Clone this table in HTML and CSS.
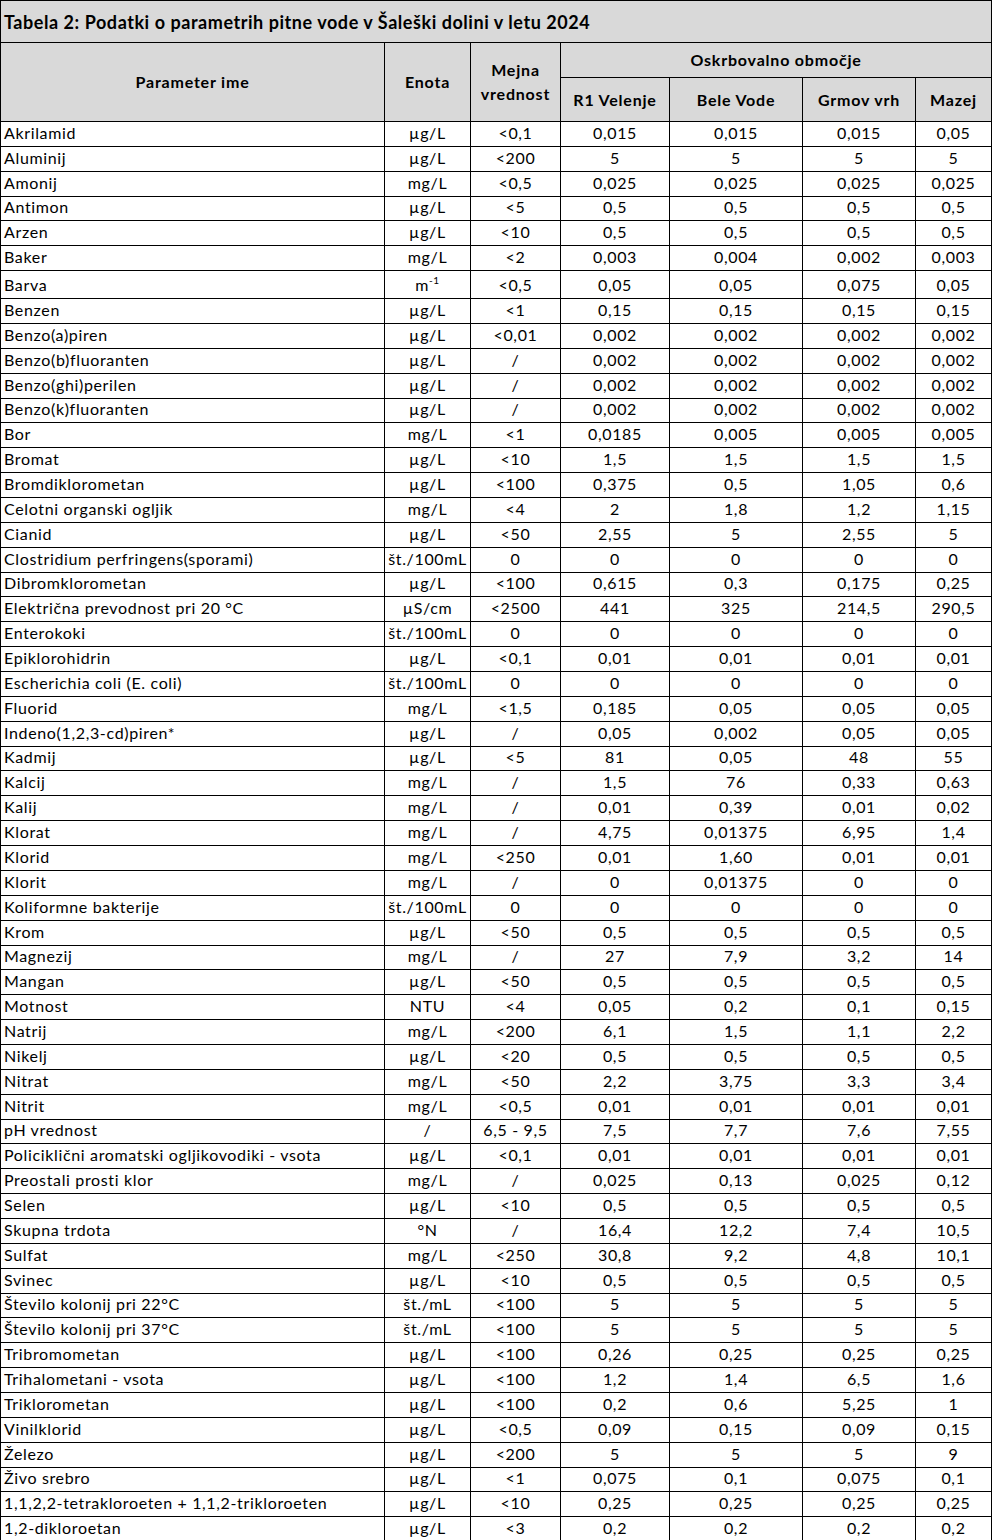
FILE: index.html
```html
<!DOCTYPE html>
<html lang="sl">
<head>
<meta charset="utf-8">
<title>Tabela 2</title>
<link rel="stylesheet" href="styles.css">
</head>
<body>
<table class="tbl">
<colgroup>
<col class="c-name"><col class="c-unit"><col class="c-lim"><col class="c-r1"><col class="c-bv"><col class="c-gv"><col class="c-mz">
</colgroup>
<thead>
<tr class="title-row"><th colspan="7" class="title">Tabela 2: Podatki o parametrih pitne vode v Šaleški dolini v letu 2024</th></tr>
<tr class="h1"><th rowspan="2">Parameter ime</th><th rowspan="2">Enota</th><th rowspan="2">Mejna<br>vrednost</th><th colspan="4">Oskrbovalno območje</th></tr>
<tr class="h2"><th>R1 Velenje</th><th>Bele Vode</th><th>Grmov vrh</th><th>Mazej</th></tr>
</thead>
<tbody>
<tr><td>Akrilamid</td><td>µg/L</td><td>&lt;0,1</td><td>0,015</td><td>0,015</td><td>0,015</td><td>0,05</td></tr>
<tr><td>Aluminij</td><td>µg/L</td><td>&lt;200</td><td>5</td><td>5</td><td>5</td><td>5</td></tr>
<tr><td>Amonij</td><td>mg/L</td><td>&lt;0,5</td><td>0,025</td><td>0,025</td><td>0,025</td><td>0,025</td></tr>
<tr><td>Antimon</td><td>µg/L</td><td>&lt;5</td><td>0,5</td><td>0,5</td><td>0,5</td><td>0,5</td></tr>
<tr><td>Arzen</td><td>µg/L</td><td>&lt;10</td><td>0,5</td><td>0,5</td><td>0,5</td><td>0,5</td></tr>
<tr><td>Baker</td><td>mg/L</td><td>&lt;2</td><td>0,003</td><td>0,004</td><td>0,002</td><td>0,003</td></tr>
<tr class="tall"><td>Barva</td><td>m<sup>-1</sup></td><td>&lt;0,5</td><td>0,05</td><td>0,05</td><td>0,075</td><td>0,05</td></tr>
<tr><td>Benzen</td><td>µg/L</td><td>&lt;1</td><td>0,15</td><td>0,15</td><td>0,15</td><td>0,15</td></tr>
<tr><td>Benzo(a)piren</td><td>µg/L</td><td>&lt;0,01</td><td>0,002</td><td>0,002</td><td>0,002</td><td>0,002</td></tr>
<tr><td>Benzo(b)fluoranten</td><td>µg/L</td><td>/</td><td>0,002</td><td>0,002</td><td>0,002</td><td>0,002</td></tr>
<tr><td>Benzo(ghi)perilen</td><td>µg/L</td><td>/</td><td>0,002</td><td>0,002</td><td>0,002</td><td>0,002</td></tr>
<tr><td>Benzo(k)fluoranten</td><td>µg/L</td><td>/</td><td>0,002</td><td>0,002</td><td>0,002</td><td>0,002</td></tr>
<tr><td>Bor</td><td>mg/L</td><td>&lt;1</td><td>0,0185</td><td>0,005</td><td>0,005</td><td>0,005</td></tr>
<tr><td>Bromat</td><td>µg/L</td><td>&lt;10</td><td>1,5</td><td>1,5</td><td>1,5</td><td>1,5</td></tr>
<tr><td>Bromdiklorometan</td><td>µg/L</td><td>&lt;100</td><td>0,375</td><td>0,5</td><td>1,05</td><td>0,6</td></tr>
<tr><td>Celotni organski ogljik</td><td>mg/L</td><td>&lt;4</td><td>2</td><td>1,8</td><td>1,2</td><td>1,15</td></tr>
<tr><td>Cianid</td><td>µg/L</td><td>&lt;50</td><td>2,55</td><td>5</td><td>2,55</td><td>5</td></tr>
<tr><td>Clostridium perfringens(sporami)</td><td>št./100mL</td><td>0</td><td>0</td><td>0</td><td>0</td><td>0</td></tr>
<tr><td>Dibromklorometan</td><td>µg/L</td><td>&lt;100</td><td>0,615</td><td>0,3</td><td>0,175</td><td>0,25</td></tr>
<tr><td>Električna prevodnost pri 20 °C</td><td>µS/cm</td><td>&lt;2500</td><td>441</td><td>325</td><td>214,5</td><td>290,5</td></tr>
<tr><td>Enterokoki</td><td>št./100mL</td><td>0</td><td>0</td><td>0</td><td>0</td><td>0</td></tr>
<tr><td>Epiklorohidrin</td><td>µg/L</td><td>&lt;0,1</td><td>0,01</td><td>0,01</td><td>0,01</td><td>0,01</td></tr>
<tr><td>Escherichia coli (E. coli)</td><td>št./100mL</td><td>0</td><td>0</td><td>0</td><td>0</td><td>0</td></tr>
<tr><td>Fluorid</td><td>mg/L</td><td>&lt;1,5</td><td>0,185</td><td>0,05</td><td>0,05</td><td>0,05</td></tr>
<tr><td>Indeno(1,2,3-cd)piren*</td><td>µg/L</td><td>/</td><td>0,05</td><td>0,002</td><td>0,05</td><td>0,05</td></tr>
<tr><td>Kadmij</td><td>µg/L</td><td>&lt;5</td><td>81</td><td>0,05</td><td>48</td><td>55</td></tr>
<tr><td>Kalcij</td><td>mg/L</td><td>/</td><td>1,5</td><td>76</td><td>0,33</td><td>0,63</td></tr>
<tr><td>Kalij</td><td>mg/L</td><td>/</td><td>0,01</td><td>0,39</td><td>0,01</td><td>0,02</td></tr>
<tr><td>Klorat</td><td>mg/L</td><td>/</td><td>4,75</td><td>0,01375</td><td>6,95</td><td>1,4</td></tr>
<tr><td>Klorid</td><td>mg/L</td><td>&lt;250</td><td>0,01</td><td>1,60</td><td>0,01</td><td>0,01</td></tr>
<tr><td>Klorit</td><td>mg/L</td><td>/</td><td>0</td><td>0,01375</td><td>0</td><td>0</td></tr>
<tr><td>Koliformne bakterije</td><td>št./100mL</td><td>0</td><td>0</td><td>0</td><td>0</td><td>0</td></tr>
<tr><td>Krom</td><td>µg/L</td><td>&lt;50</td><td>0,5</td><td>0,5</td><td>0,5</td><td>0,5</td></tr>
<tr><td>Magnezij</td><td>mg/L</td><td>/</td><td>27</td><td>7,9</td><td>3,2</td><td>14</td></tr>
<tr><td>Mangan</td><td>µg/L</td><td>&lt;50</td><td>0,5</td><td>0,5</td><td>0,5</td><td>0,5</td></tr>
<tr><td>Motnost</td><td>NTU</td><td>&lt;4</td><td>0,05</td><td>0,2</td><td>0,1</td><td>0,15</td></tr>
<tr><td>Natrij</td><td>mg/L</td><td>&lt;200</td><td>6,1</td><td>1,5</td><td>1,1</td><td>2,2</td></tr>
<tr><td>Nikelj</td><td>µg/L</td><td>&lt;20</td><td>0,5</td><td>0,5</td><td>0,5</td><td>0,5</td></tr>
<tr><td>Nitrat</td><td>mg/L</td><td>&lt;50</td><td>2,2</td><td>3,75</td><td>3,3</td><td>3,4</td></tr>
<tr><td>Nitrit</td><td>mg/L</td><td>&lt;0,5</td><td>0,01</td><td>0,01</td><td>0,01</td><td>0,01</td></tr>
<tr><td>pH vrednost</td><td>/</td><td>6,5 - 9,5</td><td>7,5</td><td>7,7</td><td>7,6</td><td>7,55</td></tr>
<tr><td>Policiklični aromatski ogljikovodiki - vsota</td><td>µg/L</td><td>&lt;0,1</td><td>0,01</td><td>0,01</td><td>0,01</td><td>0,01</td></tr>
<tr><td>Preostali prosti klor</td><td>mg/L</td><td>/</td><td>0,025</td><td>0,13</td><td>0,025</td><td>0,12</td></tr>
<tr><td>Selen</td><td>µg/L</td><td>&lt;10</td><td>0,5</td><td>0,5</td><td>0,5</td><td>0,5</td></tr>
<tr><td>Skupna trdota</td><td>°N</td><td>/</td><td>16,4</td><td>12,2</td><td>7,4</td><td>10,5</td></tr>
<tr><td>Sulfat</td><td>mg/L</td><td>&lt;250</td><td>30,8</td><td>9,2</td><td>4,8</td><td>10,1</td></tr>
<tr><td>Svinec</td><td>µg/L</td><td>&lt;10</td><td>0,5</td><td>0,5</td><td>0,5</td><td>0,5</td></tr>
<tr><td>Število kolonij pri 22°C</td><td>št./mL</td><td>&lt;100</td><td>5</td><td>5</td><td>5</td><td>5</td></tr>
<tr><td>Število kolonij pri 37°C</td><td>št./mL</td><td>&lt;100</td><td>5</td><td>5</td><td>5</td><td>5</td></tr>
<tr><td>Tribromometan</td><td>µg/L</td><td>&lt;100</td><td>0,26</td><td>0,25</td><td>0,25</td><td>0,25</td></tr>
<tr><td>Trihalometani - vsota</td><td>µg/L</td><td>&lt;100</td><td>1,2</td><td>1,4</td><td>6,5</td><td>1,6</td></tr>
<tr><td>Triklorometan</td><td>µg/L</td><td>&lt;100</td><td>0,2</td><td>0,6</td><td>5,25</td><td>1</td></tr>
<tr><td>Vinilklorid</td><td>µg/L</td><td>&lt;0,5</td><td>0,09</td><td>0,15</td><td>0,09</td><td>0,15</td></tr>
<tr><td>Železo</td><td>µg/L</td><td>&lt;200</td><td>5</td><td>5</td><td>5</td><td>9</td></tr>
<tr><td>Živo srebro</td><td>µg/L</td><td>&lt;1</td><td>0,075</td><td>0,1</td><td>0,075</td><td>0,1</td></tr>
<tr><td>1,1,2,2-tetrakloroeten + 1,1,2-trikloroeten</td><td>µg/L</td><td>&lt;10</td><td>0,25</td><td>0,25</td><td>0,25</td><td>0,25</td></tr>
<tr><td>1,2-dikloroetan</td><td>µg/L</td><td>&lt;3</td><td>0,2</td><td>0,2</td><td>0,2</td><td>0,2</td></tr>
</tbody>
</table>
</body>
</html>
```

FILE: styles.css
```css
html, body {
  margin: 0;
  padding: 0;
  background: #ffffff;
}

.tbl {
  border-collapse: collapse;
  table-layout: fixed;
  width: 991px;
  font-family: Lato, "Open Sans", "Liberation Sans", sans-serif;
  font-size: 16px;
  color: #000000;
}

.c-name { width: 384px; }
.c-unit { width: 86px; }
.c-lim { width: 90px; }
.c-r1 { width: 109px; }
.c-bv { width: 133px; }
.c-gv { width: 113px; }
.c-mz { width: 76px; }

.tbl th,
.tbl td {
  border: 1px solid #000000;
  padding: 0 3px;
  overflow: hidden;
  white-space: nowrap;
}

.tbl th {
  background: #d9d9d9;
  font-weight: bold;
  font-size: 16px;
  letter-spacing: 0.8px;
  text-align: center;
  vertical-align: middle;
  line-height: 24px;
}

.tbl th.title {
  text-align: left;
  font-size: 18px;
  letter-spacing: 0.55px;
  height: 41px;
  padding-left: 3px;
}

.h1 th { height: 34px; }
.h2 th { height: 43px; }

.tbl td {
  height: 19.86px;
  line-height: 19px;
  letter-spacing: 0.65px;
  text-align: center;
  vertical-align: bottom;
  padding-bottom: 4px;
}

.tbl td:first-child {
  text-align: left;
  padding-left: 3px;
}

.tbl tr.tall td { height: 23px; }

.tbl sup {
  font-size: 10px;
  line-height: 0;
  vertical-align: 7px;
}
```
